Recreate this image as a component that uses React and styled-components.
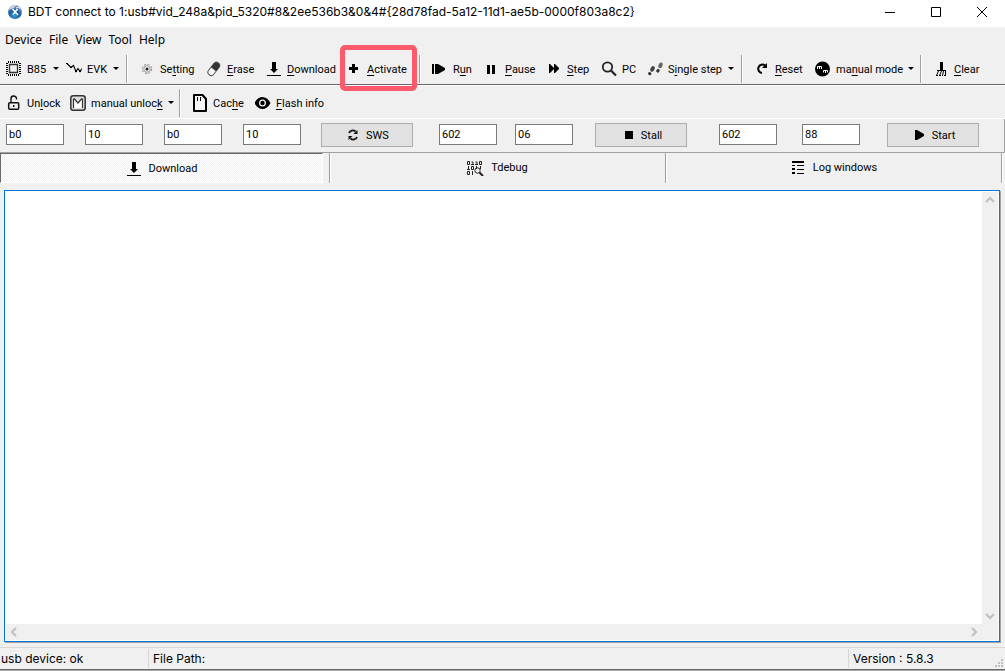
import React from "react";
import styled, { createGlobalStyle, css } from "styled-components";

const Global = createGlobalStyle`
  * { box-sizing: border-box; }
  html, body { margin: 0; background: #f0f0f0; }
  body { font: 12px/16px "Noto Sans", "Open Sans", sans-serif; color: #000; }
  button, input, textarea { font: inherit; color: inherit; }
  h1, p { margin: 0; }
`;

const Window = styled.div`
  display: flex;
  flex-direction: column;
  min-height: 100vh;
  background: #f0f0f0;
  border-bottom: 1px solid #a8a8a8;
`;

const TitleBar = styled.header`
  display: flex;
  align-items: center;
  height: 27px;
  padding-left: 7px;
  padding-bottom: 4px;
  background: #fff;
`;

const Title = styled.h1`
  flex: 1;
  min-width: 0;
  margin-left: 5px;
  font: 400 12px/16px Inter, "Noto Sans", sans-serif;
  white-space: nowrap;
`;

const PlainButton = styled.button`
  padding: 0;
  border: 0;
  background: none;
`;

const WindowButton = styled(PlainButton)`
  display: flex;
  align-items: center;
  justify-content: center;
  width: 46px;
  height: 23px;
`;

const MenuBar = styled.nav`
  display: flex;
  align-items: center;
  gap: 7px;
  height: 26px;
  padding-left: 5px;
`;

const MenuItem = styled(PlainButton)`
  font-size: 12px;
  line-height: 16px;
`;

const ToolBar = styled.div`
  display: flex;
  align-items: center;
  height: ${(p) => (p.$ruled ? 32 : 34)}px;
  padding-top: ${(p) => (p.$ruled ? 0 : 2)}px;
  padding-left: 6px;
  font: 11px/14px Roboto, "Liberation Sans", sans-serif;
  border-bottom: 1px solid ${(p) => (p.$ruled ? "#696969" : "#fff")};
  box-shadow: ${(p) => (p.$ruled ? "0 1px 0 #fff" : "none")};
`;

const Tool = styled(PlainButton)`
  position: relative;
  display: flex;
  flex: none;
  align-items: center;
  gap: 5px;
  width: ${(p) => p.$w}px;
  height: 24px;
  text-align: left;
  white-space: nowrap;
`;

const Label = styled.span`
  padding-top: 2px;
`;

const Highlight = styled.span`
  position: absolute;
  inset: -12px 2px -10px -6px;
  border: 5px solid #ff5a6c;
  border-radius: 5px;
  pointer-events: none;
  z-index: 1;
`;

const Key = styled.span`
  text-decoration: underline;
  text-underline-offset: 2px;
  text-decoration-thickness: 1px;
`;

const Caret = styled.span`
  margin-left: auto;
  margin-right: 7px;
  border: 3px solid transparent;
  border-top-color: #000;
  border-bottom: 0;
`;

const Divider = styled.span`
  flex: none;
  width: 2px;
  height: 28px;
  margin-right: 11px;
  border-left: 1px solid #a0a0a0;
  border-right: 1px solid #fff;
`;

const Form = styled.form`
  display: flex;
  align-items: center;
  height: 34px;
  padding-left: 6px;
  padding-bottom: 2px;
  border-right: 1px solid #a0a0a0;
  border-bottom: 1px solid #a0a0a0;
`;

const Group = styled.div`
  display: flex;
  flex: none;
  align-items: center;
  gap: ${(p) => p.$gap}px;
  margin-right: ${(p) => p.$after}px;
`;

const HexInput = styled.input`
  width: 58px;
  height: 21px;
  padding: 0 2px 1px;
  border: 1px solid #7a7a7a;
  border-radius: 0;
  background: #fff;
  font: 11px/16px Roboto, "Liberation Sans", sans-serif;
`;

const ActionButton = styled.button`
  display: flex;
  flex: none;
  align-items: center;
  justify-content: center;
  gap: 5px;
  width: 92px;
  height: 24px;
  margin-right: ${(p) => p.$after || 0}px;
  padding: 0;
  border: 1px solid #adadad;
  background: #e1e1e1;
  font: 11px/14px Roboto, "Liberation Sans", sans-serif;
`;

const Tabs = styled.div`
  display: grid;
  grid-template-columns: 330fr 336fr 336fr 3px;
  height: 30px;
  font: 11px/14px Roboto, "Liberation Sans", sans-serif;
`;

const tabPressed = css`
  margin-right: 6px;
  padding-top: 2px;
  border: 1px solid;
  border-color: #696969 #fff #fff #696969;
  background: repeating-conic-gradient(#fff 0 25%, #f0f0f0 0 50%) 0 0 / 2px 2px;
`;

const TabCell = styled.div`
  display: flex;
  border-right: 1px solid #a0a0a0;
  box-shadow: 1px 0 0 #fff;
`;

const Tab = styled(PlainButton)`
  display: flex;
  flex: 1;
  align-items: center;
  justify-content: center;
  gap: 7px;
  ${(p) => p.$active && tabPressed}
`;

const LogFrame = styled.main`
  display: grid;
  grid-template: 1fr 16px / 1fr 16px;
  flex: 1;
  min-height: 200px;
  margin: 7px 5px 5px 4px;
  border: 1px solid #0078d7;
  box-shadow: 1px 1px 0 #a0a0a0;
  padding: 1px;
  background: #fff;
`;

const LogText = styled.textarea`
  width: 100%;
  height: 100%;
  padding: 2px;
  border: 0;
  outline: 0;
  resize: none;
  background: #fff;
`;

const ScrollBar = styled.div`
  display: flex;
  flex-direction: ${(p) => (p.$vertical ? "column" : "row")};
  justify-content: space-between;
  background: #f0f0f0;
`;

const ScrollCorner = styled.div`
  background: #f0f0f0;
`;

const ScrollButton = styled(PlainButton)`
  display: flex;
  align-items: center;
  justify-content: center;
  width: 16px;
  height: 16px;
`;

const StatusBar = styled.footer`
  display: flex;
  align-items: center;
  height: 23px;
  border-top: 1px solid #d7d7d7;
  border-bottom: 1px solid #696969;
`;

const StatusPart = styled.p`
  flex: ${(p) => (p.$w ? `0 0 ${p.$w}px` : 1)};
  height: 19px;
  padding-left: ${(p) => (p.$first ? 1 : 4)}px;
  border-left: ${(p) => (p.$first ? 0 : 1)}px solid #d7d7d7;
  font: 12px/19px Inter, "Noto Sans", sans-serif;
  white-space: nowrap;
`;

const Glyph = styled.svg`
  flex: none;
  display: block;
`;

const Icon = ({ w = 16, h = 16, children, ...rest }) => (
  <Glyph width={w} height={h} viewBox={`0 0 ${w} ${h}`} fill="#000" aria-hidden="true" {...rest}>
    {children}
  </Glyph>
);

const icons = {
  app: (
    <Icon>
      <defs>
        <radialGradient id="globe" cx="45%" cy="75%" r="75%">
          <stop offset="0" stopColor="#2fa0d8" />
          <stop offset="0.5" stopColor="#1f5c9c" />
          <stop offset="1" stopColor="#8fa6bd" />
        </radialGradient>
      </defs>
      <circle cx="8" cy="8" r="7" fill="url(#globe)" />
      <path d="M1.500 6a7 7 0 0 1 8-5L7 4Z" fill="#c3d2e0" />
      <path d="M5.500 5l5.500 6M10.500 5L6 10.500" stroke="#fff" strokeWidth="1.500" />
      <path d="M9 4l3-1 1 2" stroke="#e4eef6" fill="none" />
    </Icon>
  ),
  chip: (
    <Icon>
      <path d="M3.500 3.500h8v8h-8z" fill="none" stroke="#333" strokeWidth="1.300" />
      <path d="M2 1h12M2 14h12M1 2v12M14 2v12" stroke="#000" strokeWidth="2" strokeDasharray="1 1" />
    </Icon>
  ),
  wave: (
    <Icon>
      <path d="M1 2.500L5 6.500 7.500 4.500 10 10.500 12 7.500 14 10.500 16 7.500" fill="none" stroke="#000" strokeWidth="1.100" />
      <path d="M0 2h2v1H0zM4 6h2v1H4zM9 9h2v2H9zM13 9h2v2h-2z" />
    </Icon>
  ),
  gear: (
    <Icon>
      <circle cx="8" cy="8" r="4.700" fill="none" stroke="#888" strokeDasharray="2 1.700" />
      <circle cx="8" cy="8" r="3.300" fill="#eee" stroke="#999" />
      <circle cx="8" cy="8" r="1.500" fill="#222" />
    </Icon>
  ),
  eraser: (
    <Icon>
      <g transform="rotate(38 8 8)">
        <rect x="4.500" y="0.500" width="6.500" height="15" rx="3.200" fill="#f5f5f5" stroke="#555" />
        <path d="M4.500 8.500V4a3.200 3.200 0 0 1 6.500 0v4.500z" fill="#333" />
      </g>
    </Icon>
  ),
  download: (
    <Icon>
      <path d="M6 1h4v7h2l-4 4-4-4h2zM1 14h14v1H1z" />
    </Icon>
  ),
  plus: (
    <Icon>
      <path d="M6 3h3v3h3v3H9v3H6V9H3V6h3z" />
    </Icon>
  ),
  run: (
    <Icon>
      <path d="M0 3h2v10H0zM3 3h3l7 4v2l-7 4H3z" />
    </Icon>
  ),
  pause: (
    <Icon>
      <path d="M3 4h3v9H3zM8 4h3v9H8z" />
    </Icon>
  ),
  step: (
    <Icon>
      <path d="M3 3h1l4 4V3h1l4 4v1l-4 4H8V8l-4 4H3z" />
    </Icon>
  ),
  search: (
    <Icon>
      <circle cx="6.500" cy="6" r="4.700" fill="none" stroke="#222" strokeWidth="1.800" />
      <path d="M10 9.500l5 5" stroke="#222" strokeWidth="2.200" />
    </Icon>
  ),
  steps: (
    <Icon fill="#333">
      <g transform="rotate(25 4 10)">
        <ellipse cx="4.500" cy="7.500" rx="2" ry="3" fill="#444" />
        <ellipse cx="4" cy="13" rx="1.700" ry="1.500" />
      </g>
      <g transform="rotate(20 12 7)">
        <ellipse cx="12.500" cy="4" rx="2" ry="3" fill="#666" />
        <ellipse cx="12" cy="10" rx="1.600" ry="1.900" />
      </g>
    </Icon>
  ),
  reset: (
    <Icon>
      <path d="M11 4.500A4.200 4.200 0 1 0 8 12" fill="none" stroke="#000" strokeWidth="2" />
      <path d="M13 2v5H8z" />
    </Icon>
  ),
  mode: (
    <Icon>
      <circle cx="7.500" cy="8" r="7.500" />
      <path d="M2.500 8V5.500h4V8M4.500 6v2M8.500 11.500V9.500h4v2M10.500 10v2" fill="none" stroke="#fff" />
    </Icon>
  ),
  broom: (
    <Icon>
      <path d="M7 1h3v8h3v1H4V9h3z" />
      <path d="M5.500 10l-2 4.500M8.500 10l-2 4.500M10.500 10l-1 4.500M12.500 10v4.500" stroke="#000" fill="none" />
      <path d="M3 14h2v1H3zM6 14h2v1H6zM9 14h1v1H9zM11 14h2v1h-2z" />
    </Icon>
  ),
  lock: (
    <Icon>
      <rect x="2.700" y="7.700" width="10" height="6.500" rx="1" fill="none" stroke="#111" strokeWidth="1.500" />
      <path d="M5 7.500V4a2.700 2.700 0 0 1 5.500-.5V4.500M7.700 10v2" fill="none" stroke="#111" strokeWidth="1.400" />
    </Icon>
  ),
  boxedM: (
    <Icon>
      <rect x="0.800" y="0.800" width="14.400" height="14.400" rx="2.500" fill="#ddd" stroke="#333" strokeWidth="1.500" />
      <path d="M3.500 13V3.500h1.500l3 4 3-4h1.500V13z" fill="#fff" />
      <path d="M3.500 13V3.500M12.500 3.500V13M4 3.500l4 4.500 4-4.500" fill="none" stroke="#333" strokeWidth="1.200" />
    </Icon>
  ),
  card: (
    <Icon h={18}>
      <path d="M2 1h8.500l3.500 4v12H2z" fill="#f6f6f6" stroke="#000" strokeWidth="2" strokeLinejoin="round" />
      <path d="M5 3h1v4H5zM8 3h1v4H8z" />
    </Icon>
  ),
  eye: (
    <Icon>
      <path d="M-.5 8C1.500 4 4.500 2 7.500 2s6 2 8 6c-2 4-5 6-8 6s-6-2-8-6z" />
      <circle cx="7.500" cy="8" r="3.500" fill="#f0f0f0" />
      <circle cx="7.500" cy="8" r="2.200" />
    </Icon>
  ),
  swap: (
    <Icon>
      <path d="M4 6a4 4 0 0 1 6.500-1.500M12 10a4 4 0 0 1-6.500 1.500" fill="none" stroke="#111" strokeWidth="1.800" />
      <path d="M12.500 3v4H8.500zM3.500 13V9h4z" fill="#111" />
    </Icon>
  ),
  stop: (
    <Icon>
      <path d="M5 4h8v8H5z" />
    </Icon>
  ),
  play: (
    <Icon>
      <path d="M4 3h2l7 4v2l-7 4H4z" />
    </Icon>
  ),
  binary: (
    <Icon w={17}>
      <g fill="none" stroke="#222">
        <path d="M0.500 1.500h2v3h-2zM12.500 1.500h2v3h-2zM4.500 2H6v3M4 4.500h3M8.500 2H10v3M8 4.500h3" />
        <path d="M1.500 6v4M4.500 6.500h2v3h-2zM9.500 6v3M13.500 6v3M0 9.500h3M0.500 11.500h2v3h-2zM5.500 11v4" />
        <circle cx="10.500" cy="10.500" r="2.700" />
        <path d="M12.500 12.500l3.500 3.500" strokeWidth="2" />
      </g>
    </Icon>
  ),
  list: (
    <Icon>
      <path d="M2 1h12v2H2zM2 5h3v1H2zM2 8h3v2H2zM2 12h3v2H2zM7 5h7v1H7zM7 9h7v1H7zM7 13h7v1H7z" />
    </Icon>
  ),
};

const chevrons = {
  up: "M4 10l4-4 4 4",
  down: "M4 6l4 4 4-4",
  left: "M10 4L6 8l4 4",
  right: "M6 4l4 4-4 4",
};

const ScrollArrow = ({ dir }) => (
  <ScrollButton type="button" aria-label={`Scroll ${dir}`}>
    <Icon>
      <path d={chevrons[dir]} fill="none" stroke="#bfbfbf" strokeWidth="2" />
    </Icon>
  </ScrollButton>
);

const Mnemonic = ({ text }) => {
  const at = text.indexOf("_");
  if (at < 0) return <Label>{text}</Label>;
  return (
    <Label>
      {text.slice(0, at)}
      <Key>{text[at + 1]}</Key>
      {text.slice(at + 2)}
    </Label>
  );
};

const mainTools = [
  { icon: "chip", text: "B85", w: 60, menu: true },
  { icon: "wave", text: "EVK", w: 60, menu: true },
  null,
  { icon: "gear", text: "Se_tting", w: 67 },
  { icon: "eraser", text: "_Erase", w: 60 },
  { icon: "download", text: "_Download", w: 80 },
  { icon: "plus", text: "_Activate", w: 73, marked: true },
  null,
  { icon: "run", text: "R_un", w: 52 },
  { icon: "pause", text: "_Pause", w: 62 },
  { icon: "step", text: "_Step", w: 55 },
  { icon: "search", text: "PC", w: 46 },
  { icon: "steps", text: "S_ingle step", w: 94, menu: true },
  null,
  { icon: "reset", text: "_Reset", w: 61 },
  { icon: "mode", text: "ma_nual mode", w: 105, menu: true },
  null,
  { icon: "broom", text: "_Clear", w: 60 },
];

const flashTools = [
  { icon: "lock", text: "Un_lock", w: 64 },
  { icon: "boxedM", text: "manual unloc_k", w: 109, menu: true },
  null,
  { icon: "card", text: "Cac_he", w: 63 },
  { icon: "eye", text: "_Flash info", w: 80 },
];

const Tools = ({ items, label, ruled }) => (
  <ToolBar role="toolbar" aria-label={label} $ruled={ruled}>
    {items.map((t, i) =>
      t ? (
        <Tool key={i} type="button" $w={t.w}>
          {icons[t.icon]}
          <Mnemonic text={t.text} />
          {t.menu && <Caret />}
          {t.marked && <Highlight />}
        </Tool>
      ) : (
        <Divider key={i} />
      )
    )}
  </ToolBar>
);

const Action = ({ icon, children, after }) => (
  <ActionButton type="button" $after={after}>
    {icons[icon]}
    <Label>{children}</Label>
  </ActionButton>
);

export default function App() {
  return (
    <>
      <Global />
      <Window>
        <TitleBar>
          {icons.app}
          <Title>BDT connect to 1:usb#vid_248a&amp;pid_5320#8&amp;2ee536b3&amp;0&amp;4#&#123;28d78fad-5a12-11d1-ae5b-0000f803a8c2&#125;</Title>
          <WindowButton type="button" aria-label="Minimize">
            <Icon w={12} h={12}><path d="M1 6h10v1H1z" /></Icon>
          </WindowButton>
          <WindowButton type="button" aria-label="Maximize">
            <Icon w={12} h={12}><path d="M1.500 1.500h9v9h-9z" fill="none" stroke="#000" /></Icon>
          </WindowButton>
          <WindowButton type="button" aria-label="Close">
            <Icon w={12} h={12}><path d="M1 1l10 10M11 1L1 11" stroke="#000" /></Icon>
          </WindowButton>
        </TitleBar>
        <MenuBar>
          {["Device", "File", "View", "Tool", "Help"].map((m) => (
            <MenuItem type="button" key={m}>{m}</MenuItem>
          ))}
        </MenuBar>
        <Tools items={mainTools} label="Debug" ruled />
        <Tools items={flashTools} label="Flash" />
        <Form>
          <Group $gap={21} $after={20}>
            <HexInput aria-label="SWS address" defaultValue="b0" />
            <HexInput aria-label="SWS length" defaultValue="10" />
            <HexInput aria-label="SWS second address" defaultValue="b0" />
            <HexInput aria-label="SWS second length" defaultValue="10" />
          </Group>
          <Action icon="swap" after={26}>SWS</Action>
          <Group $gap={18} $after={22}>
            <HexInput aria-label="Stall address" defaultValue="602" />
            <HexInput aria-label="Stall value" defaultValue="06" />
          </Group>
          <Action icon="stop" after={32}>Stall</Action>
          <Group $gap={25} $after={27}>
            <HexInput aria-label="Start address" defaultValue="602" />
            <HexInput aria-label="Start value" defaultValue="88" />
          </Group>
          <Action icon="play">Start</Action>
        </Form>
        <Tabs role="tablist">
          <TabCell role="presentation">
            <Tab type="button" role="tab" aria-selected="true" $active>{icons.download}Download</Tab>
          </TabCell>
          <TabCell role="presentation">
            <Tab type="button" role="tab" aria-selected="false">{icons.binary}Tdebug</Tab>
          </TabCell>
          <TabCell role="presentation">
            <Tab type="button" role="tab" aria-selected="false">{icons.list}Log windows</Tab>
          </TabCell>
        </Tabs>
        <LogFrame>
          <LogText aria-label="Output" />
          <ScrollBar $vertical>
            <ScrollArrow dir="up" />
            <ScrollArrow dir="down" />
          </ScrollBar>
          <ScrollBar>
            <ScrollArrow dir="left" />
            <ScrollArrow dir="right" />
          </ScrollBar>
          <ScrollCorner />
        </LogFrame>
        <StatusBar>
          <StatusPart $w={148} $first>usb device: ok</StatusPart>
          <StatusPart>File Path:</StatusPart>
          <StatusPart $w={147}>Version : 5.8.3</StatusPart>
          <Icon w={10} h={20} fill="#bfbfbf">
            <path d="M6 10h2v2H6zM3 13h2v2H3zM6 13h2v2H6zM0 16h2v2H0zM3 16h2v2H3zM6 16h2v2H6z" />
          </Icon>
        </StatusBar>
      </Window>
    </>
  );
}
